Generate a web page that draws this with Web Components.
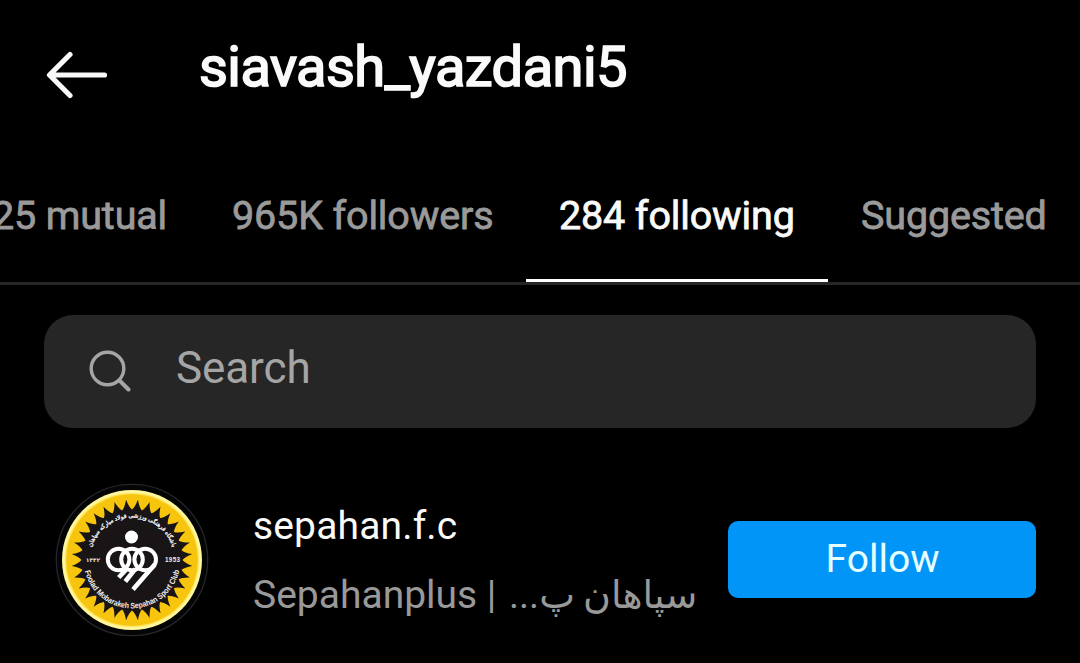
<!DOCTYPE html>
<html lang="en">
<head>
<meta charset="utf-8">
<title>Following</title>
<style>
html,body{margin:0;background:#000;height:663px;overflow:hidden}
body{font-family:Roboto,"Noto Sans","DejaVu Sans",sans-serif;color:#fafafa}
</style>
</head>
<body>
<follow-page></follow-page>
<script>
const define=(name,html,setup)=>customElements.define(name,class extends HTMLElement{
  constructor(){super();this.attachShadow({mode:'open'}).innerHTML=html;}
  connectedCallback(){if(setup)setup(this,this.shadowRoot);}
});

define('page-header',`<style>
:host{display:flex;height:150px;box-sizing:border-box;padding:36px 0 0 46px}
svg{width:62px;height:50px;margin-top:14px;flex:none}
h1{margin:1px 0 0 91px;font-size:56px;line-height:60px;font-weight:400;-webkit-text-stroke:1.7px currentColor;letter-spacing:-.55px}
</style><svg viewBox="0 0 62 50" fill="none" stroke="#f8f8f8" stroke-width="5.2" stroke-linecap="round" stroke-linejoin="round"><path d="M58.5 25H4M24 4.5 3.5 25 24 45.5"/></svg><h1><slot></slot></h1>`);

define('nav-tab',`<style>
:host{display:block;flex:none;box-sizing:border-box;height:102px;padding:12px 0 0 33px;font-size:39.5px;line-height:48px;letter-spacing:-.15px;white-space:nowrap;color:#9a9a9a;-webkit-text-stroke:.8px currentColor;border-bottom:3px solid transparent}
:host([selected]){color:#fafafa;border-color:#fff}
</style><slot></slot>`);

define('tab-bar',`<style>
:host{display:flex;height:135px;box-sizing:border-box;padding-top:30px;border-bottom:3px solid #262626;overflow:hidden}
</style><slot></slot>`);

define('search-field',`<style>
:host{display:flex;align-items:flex-start;box-sizing:border-box;height:113px;margin:30px 44px 0;padding:0 45px;border-radius:29px;background:#262626;color:#a5a5a5;font-size:44px;line-height:52px}
svg{width:42px;height:42px;margin-top:35px}
span{margin:27px 0 0 45px;letter-spacing:-.1px}
</style><svg viewBox="0 0 42 42" fill="none" stroke="#a5a5a5" stroke-linecap="round"><circle cx="18.5" cy="18.5" r="16.3" stroke-width="3.4"/><path d="m30.5 30.5 9 9" stroke-width="4"/></svg><span><slot></slot></span>`);

define('club-badge',`<style>
:host{display:block;width:154px;height:154px;flex:none}
svg{display:block}
text{font-family:"Liberation Sans","DejaVu Sans",sans-serif;fill:#eee}
</style><svg width="154" height="154" viewBox="-77 -77 154 154">
<defs><path id="low" d="M-48.4 0A48.4 48.4 0 0 0 48.4 0"/><path id="high" d="M-42.5 0A42.5 42.5 0 0 1 42.5 0"/></defs>
<circle r="75.7" fill="#050506" stroke="#25262b" stroke-width="1.3"/>
<circle r="70" fill="#fff59a"/><circle r="67" fill="#fbe45a"/><circle r="65.8" fill="#f7c50d"/>
<path class="sun" fill="#191516"/>
<text font-size="8" font-weight="700" textLength="130" lengthAdjust="spacingAndGlyphs"><textPath href="#low" startOffset="11">Foolad Mobarakeh Sepahan Sport Club</textPath></text>
<text font-size="5.9" stroke="#eee" stroke-width=".35" direction="rtl" text-anchor="middle"><textPath href="#high" startOffset="50%">باشگاه فرهنگی ورزشی فولاد مبارکه سپاهان</textPath></text>
<text x="33" y="2.3" font-size="6.3" font-weight="700" textLength="15">1953</text>
<text x="-46" y="2" font-size="5.5" font-weight="700" textLength="14">۱۳۳۲</text>
<g fill="none" stroke="#fff" stroke-width="4"><circle cx="-13.4" cy="-.5" r="10.8"/><circle cx="0" cy="-.5" r="10.8"/><circle cx="13.2" cy="-.5" r="10.8"/>
<path d="M-4.8 8.5-13.3 17.5M3.2 9-6.7 21.5M22.7 4.5 1 29.5" stroke-width="4.6"/></g><circle cx="-.5" cy="-23" r="6.5" fill="#fff"/>
</svg>`,(el,root)=>{
  const n=32,at=(r,a)=>(r*Math.sin(a)).toFixed(2)+' '+(-r*Math.cos(a)).toFixed(2),step=2*Math.PI/n;
  let d='M'+at(60.5,step/2);
  for(let i=1;i<=n;i++){const a=i*step;d+='Q'+at(53,a-step*.3)+' '+at(50.5,a)+'Q'+at(53,a+step*.3)+' '+at(60.5,a+step/2);}
  root.querySelector('.sun').setAttribute('d',d+'Z');
});

define('follow-button',`<style>
:host{display:block;flex:none;width:308px;height:77px;border-radius:10px;background:#0095f6}
button{all:unset;display:block;width:100%;text-align:center;font-size:39px;line-height:46px;padding-top:15px;color:#e6ffff;text-indent:1px}
</style><button><slot></slot></button>`);

define('user-row',`<style>
:host{display:flex;margin:55px 44px 0 11px;padding-left:44px;height:155px}
.names{width:442px;margin-left:44px;padding-top:19px;overflow:hidden;white-space:nowrap;font-size:39px;line-height:48px}
.user{letter-spacing:.15px}
.full{margin-top:21px;height:60px;color:#999}
follow-button{margin:38px 0 0 33px}
</style><club-badge></club-badge><div class="names"><div class="user"><slot name="user"></slot></div><div class="full"><slot name="full"></slot></div></div><follow-button>Follow</follow-button>`);

define('follow-page',`<style>
:host{display:block;width:1080px;height:663px;overflow:hidden;background:#000}
.m{margin-left:-41px;width:240px;box-sizing:border-box}.f{width:327px}.g{width:302px}.s{width:252px}
.fa{display:inline-block;direction:rtl;font-family:"DejaVu Sans",sans-serif;font-size:38px;margin-left:3px;word-spacing:-4px}
.dots{font-family:Roboto,sans-serif;font-size:38px;letter-spacing:-2.4px}
</style>
<page-header>siavash_yazdani5</page-header>
<tab-bar><nav-tab class="m">25 mutual</nav-tab><nav-tab class="f">965K followers</nav-tab><nav-tab class="g" selected>284 following</nav-tab><nav-tab class="s">Suggested</nav-tab></tab-bar>
<search-field>Search</search-field>
<user-row><span slot="user">sepahan.f.c</span><span slot="full">Sepahanplus | <span class="fa">سپاهان پ<span class="dots">...</span></span></span></user-row>`);
</script>
</body>
</html>
